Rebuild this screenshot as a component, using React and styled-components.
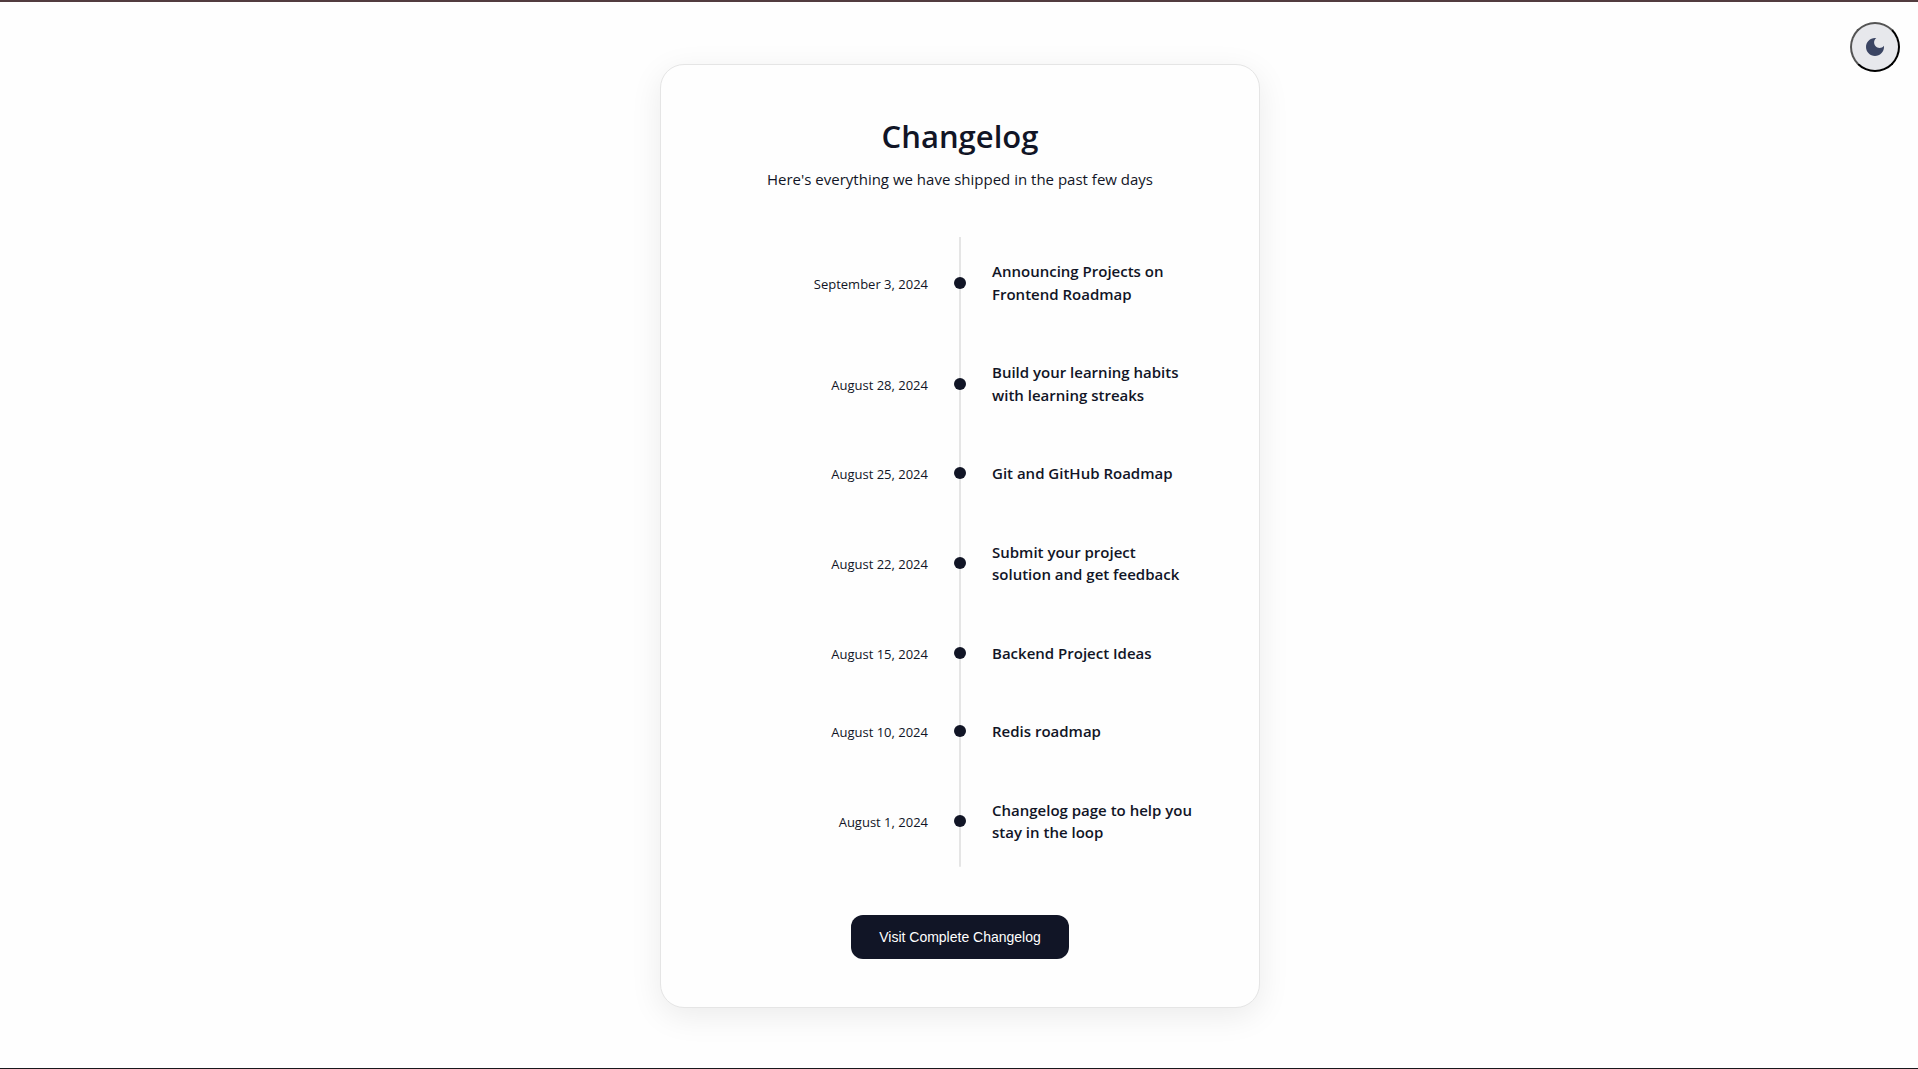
import React, { useState } from "react";
import styled, { createGlobalStyle } from "styled-components";

const ink = "#111526";

const GlobalStyle = createGlobalStyle`
  *, *::before, *::after { box-sizing: border-box; }
  body {
    margin: 0;
    color: ${ink};
    background: #fefefe;
    font-family: "Segoe UI", "Open Sans", "Noto Sans", sans-serif;
  }
`;

const Page = styled.div`
  min-height: 100vh;
  display: flex;
  align-items: flex-start;
  justify-content: center;
  padding: 62px 24px 58px 26px;
  border-top: 2px solid #523c3f;
  border-bottom: 1px solid #18181c;
`;

const ThemeButton = styled.button`
  position: fixed;
  top: 22px;
  right: 18px;
  width: 50px;
  height: 50px;
  display: flex;
  align-items: center;
  justify-content: center;
  padding: 0;
  border: 2px outset #000;
  border-radius: 50%;
  background: #e7e8ec;
  color: #3b4563;
  cursor: pointer;
`;

const Card = styled.main`
  width: 100%;
  max-width: 600px;
  display: flex;
  flex-direction: column;
  align-items: center;
  gap: 48px;
  padding: 48px;
  border: 1px solid #e5e5e5;
  border-radius: 24px;
  background: #fefefe;
  box-shadow: 0 8px 32px rgba(0, 0, 0, 0.08);
`;

const Header = styled.header`
  text-align: center;
`;

const Heading = styled.h1`
  margin: 0 0 10px;
  font-size: 31px;
  line-height: 46px;
  font-weight: 600;
`;

const Lead = styled.p`
  margin: 0;
  font-size: 15px;
  line-height: 20px;
`;

const Timeline = styled.ol`
  align-self: stretch;
  display: flex;
  flex-direction: column;
  gap: 10px;
  margin: 0;
  padding: 0;
  list-style: none;
  background: linear-gradient(#e5e5e5, #e5e5e5) center / 2px 100% no-repeat;
`;

const Entry = styled.li`
  display: grid;
  grid-template-columns: 1fr 12px 1fr;
  align-items: center;
  column-gap: 26px;
  padding: 23px 0;
`;

const EntryDate = styled.time`
  padding-top: 2px;
  text-align: right;
  font-size: 13px;
  line-height: 20px;
`;

const Dot = styled.span`
  width: 12px;
  height: 12px;
  border-radius: 50%;
  background: ${ink};
`;

const EntryTitle = styled.h2`
  max-width: 204px;
  margin: 0;
  font-size: 15px;
  line-height: 1.5;
  font-weight: 600;
`;

const VisitButton = styled.button`
  height: 44px;
  padding: 0 28px;
  border: 0;
  border-radius: 12px;
  background: ${ink};
  color: #fff;
  font-family: Arial, "Liberation Sans", sans-serif;
  font-size: 14px;
  cursor: pointer;
`;

const entries = [
  ["2024-09-03", "September 3, 2024", "Announcing Projects on Frontend Roadmap"],
  ["2024-08-28", "August 28, 2024", "Build your learning habits with learning streaks"],
  ["2024-08-25", "August 25, 2024", "Git and GitHub Roadmap"],
  ["2024-08-22", "August 22, 2024", "Submit your project solution and get feedback"],
  ["2024-08-15", "August 15, 2024", "Backend Project Ideas"],
  ["2024-08-10", "August 10, 2024", "Redis roadmap"],
  ["2024-08-01", "August 1, 2024", "Changelog page to help you stay in the loop"],
];

function MoonIcon() {
  return (
    <svg width="24" height="24" viewBox="0 0 24 24" fill="currentColor" aria-hidden="true">
      <path d="M12 3c-4.97 0-9 4.03-9 9s4.03 9 9 9 9-4.03 9-9c0-.46-.04-.92-.1-1.36-.98 1.37-2.58 2.26-4.4 2.26-2.98 0-5.4-2.42-5.4-5.4 0-1.81.89-3.42 2.26-4.4-.44-.06-.9-.1-1.36-.1z" />
    </svg>
  );
}

export default function App() {
  const [pressed, setPressed] = useState(false);
  return (
    <Page>
      <GlobalStyle />
      <ThemeButton
        type="button"
        aria-label="Toggle theme"
        aria-pressed={pressed}
        onClick={() => setPressed(!pressed)}
      >
        <MoonIcon />
      </ThemeButton>
      <Card>
        <Header>
          <Heading>Changelog</Heading>
          <Lead>Here's everything we have shipped in the past few days</Lead>
        </Header>
        <Timeline>
          {entries.map(([iso, date, title]) => (
            <Entry key={iso}>
              <EntryDate dateTime={iso}>{date}</EntryDate>
              <Dot />
              <EntryTitle>{title}</EntryTitle>
            </Entry>
          ))}
        </Timeline>
        <VisitButton type="button">Visit Complete Changelog</VisitButton>
      </Card>
    </Page>
  );
}
